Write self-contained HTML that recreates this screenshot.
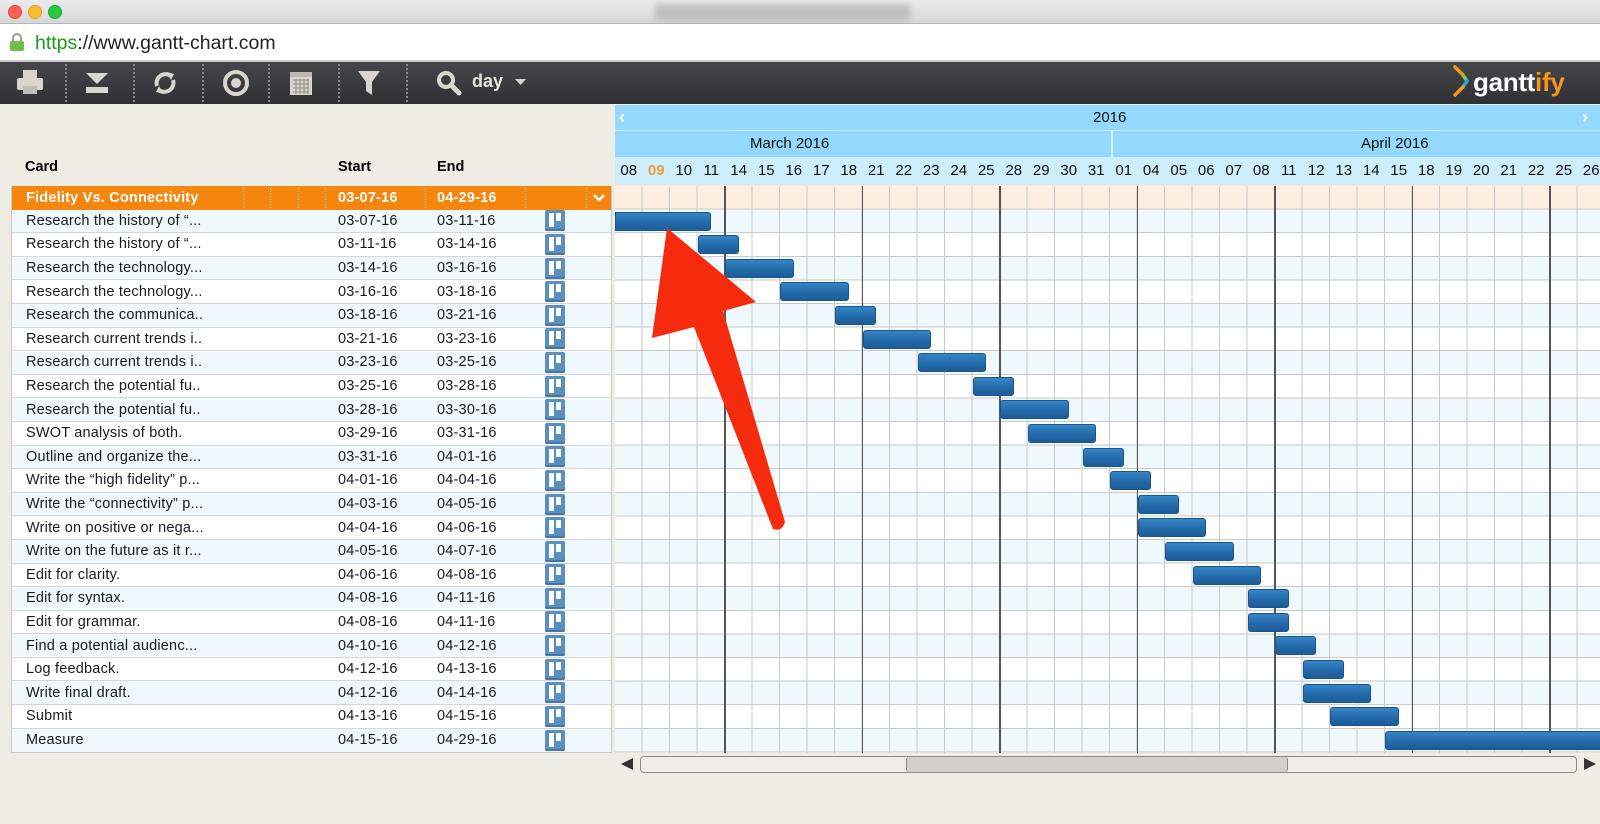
<!DOCTYPE html>
<html><head><meta charset="utf-8"><style>
*{margin:0;padding:0;box-sizing:border-box}
body{width:1600px;height:824px;overflow:hidden;background:#eeede4;font-family:"Liberation Sans",sans-serif;position:relative}
.abs{position:absolute}
#title{left:0;top:0;width:1600px;height:24px;background:linear-gradient(#ebebeb,#d6d6d6);border-bottom:1px solid #b5b5b5}
.dot{position:absolute;top:5px;width:14px;height:14px;border-radius:50%}
#addr{left:0;top:24px;width:1600px;height:38px;background:#fff;border-bottom:2px solid #c9c9c9}
#tb{left:0;top:62px;width:1600px;height:42px;background:linear-gradient(#45474b,#2f3034);}
.sep{position:absolute;top:2px;height:38px;border-left:2px dotted #8a8a8a}
#lt{left:11px;top:186px;width:601px}
.row{display:flex;height:23.6px;align-items:center;font-size:14.5px;color:#1a1a1a;border-bottom:1px solid #d6d6d6;letter-spacing:.2px}
.row .c{width:326px;padding-left:14px;white-space:nowrap;overflow:hidden}
.row .s{width:99px}
.row .e{width:108px}
.ic{width:20px;height:21px;background:#5a8fc0;border-radius:2px;position:relative;box-shadow:inset 0 -2px 0 #4776a3}
.ic:before{content:"";position:absolute;left:4px;top:3px;width:5px;height:14px;background:#fff}
.ic:after{content:"";position:absolute;left:11px;top:3px;width:5px;height:8px;background:#fff}
.rb{background:#eef8fd}.rw{background:#fff}
.or{background:#f7860f;color:#fff;font-weight:bold;border-bottom:none}
#days{left:615px;top:157px;height:28px;display:flex;background:#cdeefd;width:985px;overflow:hidden}
#days span{flex:0 0 27.5px;text-align:center;font-size:15px;line-height:28px;color:#111}
#grid{left:615px;top:186px;width:985px;height:567px;
background:
repeating-linear-gradient(to right,transparent 0 26.5px,#c9c9c9 26.5px 27.5px),
repeating-linear-gradient(to bottom,transparent 0 22.6px,#c9c9c9 22.6px 23.6px),
linear-gradient(#fdeee0 0 23.6px,transparent 23.6px),
repeating-linear-gradient(to bottom,#fff 0 23.6px,#eef8fd 23.6px 47.2px);}
.wk{position:absolute;top:186px;height:567px;width:1.5px;background:#555}
.bar{position:absolute;height:19px;border-radius:3px;background:linear-gradient(#3585c6,#2268a8 60%,#1d5c98);border:1px solid #1b558d}
</style></head><body>
<div id="title" class="abs">
<div class="dot" style="left:8px;background:#fc5f57;border:1px solid #df4744"></div>
<div class="dot" style="left:28px;background:#fdbc2e;border:1px solid #dea033"></div>
<div class="dot" style="left:48px;background:#28c840;border:1px solid #1ea934"></div>
<div class="abs" style="left:655px;top:4px;width:255px;height:17px;background:#bfbfbf;filter:blur(3px);border-radius:3px"></div>
</div>
<div id="addr" class="abs">
<svg class="abs" style="left:9px;top:8px" width="16" height="20" viewBox="0 0 16 20"><path d="M4 9V6a4 4 0 0 1 8 0v3" fill="none" stroke="#9a9a9a" stroke-width="2"/><rect x="1" y="9" width="14" height="10" rx="2" fill="#6cc04a"/></svg>
<div class="abs" style="left:35px;top:8px;font-size:19.5px;color:#222"><span style="color:#1a9a1a">https</span>://www.gantt-chart.com</div>
</div>
<div id="tb" class="abs">
<svg class="abs" style="left:16px;top:7px" width="28" height="26" viewBox="0 0 28 26"><rect x="7" y="1" width="14" height="8" fill="#d8d6cc"/><rect x="1" y="9" width="26" height="12" rx="2" fill="#d8d6cc"/><rect x="7" y="17" width="14" height="8" fill="#c2c0b6"/></svg>
<div class="sep" style="left:65px"></div>
<svg class="abs" style="left:85px;top:9px" width="24" height="24" viewBox="0 0 24 24"><path d="M1 2h22l-11 11z" fill="#d8d6cc"/><rect x="1" y="16" width="22" height="6" fill="#d8d6cc"/></svg>
<div class="sep" style="left:133px"></div>
<svg class="abs" style="left:152px;top:8px" width="26" height="26" viewBox="0 0 26 26"><path d="M5 16A9 9 0 0 1 19 6" fill="none" stroke="#d8d6cc" stroke-width="4"/><path d="M21 10A9 9 0 0 1 7 20" fill="none" stroke="#d8d6cc" stroke-width="4"/><path d="M15 2l7 2-3 6z" fill="#d8d6cc"/><path d="M11 24l-7-2 3-6z" fill="#d8d6cc"/></svg>
<div class="sep" style="left:202px"></div>
<svg class="abs" style="left:222px;top:7px" width="28" height="28"><circle cx="14" cy="14" r="11" fill="none" stroke="#d8d6cc" stroke-width="4"/><circle cx="14" cy="14" r="5" fill="#d8d6cc"/></svg>
<div class="sep" style="left:268px"></div>
<svg class="abs" style="left:289px;top:7px" width="24" height="27" viewBox="0 0 24 27"><rect x="1" y="3" width="22" height="23" fill="#d8d6cc"/><rect x="1" y="3" width="22" height="5" fill="#bcbab0"/><path d="M4 11h16M4 15h16M4 19h16M4 23h16M7 10v15M11 10v15M15 10v15M19 10v15" stroke="#8d8b83" stroke-width="1"/></svg>
<div class="sep" style="left:338px"></div>
<svg class="abs" style="left:357px;top:8px" width="24" height="26" viewBox="0 0 24 26"><path d="M1 1h22l-8 11v13l-6-4v-9z" fill="#d8d6cc"/></svg>
<div class="sep" style="left:406px"></div>
<svg class="abs" style="left:436px;top:8px" width="26" height="26" viewBox="0 0 26 26"><circle cx="10" cy="10" r="7" fill="none" stroke="#d8d6cc" stroke-width="4"/><path d="M15 15l8 8" stroke="#d8d6cc" stroke-width="5" stroke-linecap="round"/></svg>
<div class="abs" style="left:472px;top:9px;font-size:18px;font-weight:bold;color:#e6e4da">day</div>
<svg class="abs" style="left:515px;top:17px" width="11" height="7"><path d="M0 0h11L5.5 6z" fill="#d8d6cc"/></svg>
<svg class="abs" style="left:1453px;top:2px" width="18" height="34" viewBox="0 0 18 34"><path d="M2 3l8 8" stroke="#f7941d" stroke-width="3.5" stroke-linecap="round"/><path d="M10 11l4 6" stroke="#8bc34a" stroke-width="3.5" stroke-linecap="round"/><path d="M14 17l-4 6" stroke="#2aa5dc" stroke-width="3.5" stroke-linecap="round"/><path d="M10 23l-8 8" stroke="#f7941d" stroke-width="3.5" stroke-linecap="round"/></svg>
<div class="abs" style="left:1473px;top:5px;font-size:26px;font-weight:bold;color:#fff;letter-spacing:-.3px">gantt<span style="color:#f7941d">ify</span></div>
</div>

<div class="abs" style="left:615px;top:105px;width:985px;height:26px;background:#94d8fd;border-bottom:1px solid #cdeefd">
<div class="abs" style="left:4px;top:2px;color:#fff;font-weight:bold;font-size:18px">&#8249;</div>
<div class="abs" style="left:478px;top:4px;font-size:15px;color:#111">2016</div>
<div class="abs" style="left:967px;top:2px;color:#fff;font-weight:bold;font-size:18px">&#8250;</div>
</div>
<div class="abs" style="left:615px;top:131px;width:985px;height:26px;background:#94d8fd">
<div class="abs" style="left:496px;top:0;width:1.5px;height:26px;background:#d9f2fe"></div>
<div class="abs" style="left:135px;top:4px;font-size:15px;color:#111">March 2016</div>
<div class="abs" style="left:746px;top:4px;font-size:15px;color:#111">April 2016</div>
</div>
<div id="days" class="abs"><span>08</span><span style="color:#f39b2d;font-weight:bold">09</span><span>10</span><span>11</span><span>14</span><span>15</span><span>16</span><span>17</span><span>18</span><span>21</span><span>22</span><span>23</span><span>24</span><span>25</span><span>28</span><span>29</span><span>30</span><span>31</span><span>01</span><span>04</span><span>05</span><span>06</span><span>07</span><span>08</span><span>11</span><span>12</span><span>13</span><span>14</span><span>15</span><span>18</span><span>19</span><span>20</span><span>21</span><span>22</span><span>25</span><span>26</span></div>

<div class="abs" style="left:25px;top:159px;font-size:14.5px;font-weight:bold">Card</div>
<div class="abs" style="left:338px;top:159px;font-size:14.5px;font-weight:bold">Start</div>
<div class="abs" style="left:437px;top:159px;font-size:14.5px;font-weight:bold">End</div>

<div id="lt" class="abs" style="border-left:1px solid #c8c8c8;border-right:1px solid #c8c8c8;border-bottom:1px solid #c8c8c8">
<div class="row or" style="position:relative"><div class="c">Fidelity Vs. Connectivity</div><div class="s">03-07-16</div><div class="e">04-29-16</div>
<div class="sep" style="top:2px;height:20px;left:231px;border-left:1.5px dotted #ffd9a8"></div><div class="sep" style="top:2px;height:20px;left:258px;border-left:1.5px dotted #ffd9a8"></div><div class="sep" style="top:2px;height:20px;left:286px;border-left:1.5px dotted #ffd9a8"></div><div class="sep" style="top:2px;height:20px;left:313px;border-left:1.5px dotted #ffd9a8"></div><div class="sep" style="top:2px;height:20px;left:413px;border-left:1.5px dotted #ffd9a8"></div><div class="sep" style="top:2px;height:20px;left:513px;border-left:1.5px dotted #ffd9a8"></div><div class="sep" style="top:2px;height:20px;left:574px;border-left:1.5px dotted #ffd9a8"></div>
<svg class="abs" style="left:581px;top:8px" width="12" height="8"><path d="M1 1l5 5 5-5" fill="none" stroke="#fff" stroke-width="2.5"/></svg></div>
<div class="row rb"><div class="c">Research the history of “...</div><div class="s">03-07-16</div><div class="e">03-11-16</div><div class="ic"></div></div>
<div class="row rw"><div class="c">Research the history of “...</div><div class="s">03-11-16</div><div class="e">03-14-16</div><div class="ic"></div></div>
<div class="row rb"><div class="c">Research the technology...</div><div class="s">03-14-16</div><div class="e">03-16-16</div><div class="ic"></div></div>
<div class="row rw"><div class="c">Research the technology...</div><div class="s">03-16-16</div><div class="e">03-18-16</div><div class="ic"></div></div>
<div class="row rb"><div class="c">Research the communica..</div><div class="s">03-18-16</div><div class="e">03-21-16</div><div class="ic"></div></div>
<div class="row rw"><div class="c">Research current trends i..</div><div class="s">03-21-16</div><div class="e">03-23-16</div><div class="ic"></div></div>
<div class="row rb"><div class="c">Research current trends i..</div><div class="s">03-23-16</div><div class="e">03-25-16</div><div class="ic"></div></div>
<div class="row rw"><div class="c">Research the potential fu..</div><div class="s">03-25-16</div><div class="e">03-28-16</div><div class="ic"></div></div>
<div class="row rb"><div class="c">Research the potential fu..</div><div class="s">03-28-16</div><div class="e">03-30-16</div><div class="ic"></div></div>
<div class="row rw"><div class="c">SWOT analysis of both.</div><div class="s">03-29-16</div><div class="e">03-31-16</div><div class="ic"></div></div>
<div class="row rb"><div class="c">Outline and organize the...</div><div class="s">03-31-16</div><div class="e">04-01-16</div><div class="ic"></div></div>
<div class="row rw"><div class="c">Write the “high fidelity” p...</div><div class="s">04-01-16</div><div class="e">04-04-16</div><div class="ic"></div></div>
<div class="row rb"><div class="c">Write the “connectivity” p...</div><div class="s">04-03-16</div><div class="e">04-05-16</div><div class="ic"></div></div>
<div class="row rw"><div class="c">Write on positive or nega...</div><div class="s">04-04-16</div><div class="e">04-06-16</div><div class="ic"></div></div>
<div class="row rb"><div class="c">Write on the future as it r...</div><div class="s">04-05-16</div><div class="e">04-07-16</div><div class="ic"></div></div>
<div class="row rw"><div class="c">Edit for clarity.</div><div class="s">04-06-16</div><div class="e">04-08-16</div><div class="ic"></div></div>
<div class="row rb"><div class="c">Edit for syntax.</div><div class="s">04-08-16</div><div class="e">04-11-16</div><div class="ic"></div></div>
<div class="row rw"><div class="c">Edit for grammar.</div><div class="s">04-08-16</div><div class="e">04-11-16</div><div class="ic"></div></div>
<div class="row rb"><div class="c">Find a potential audienc...</div><div class="s">04-10-16</div><div class="e">04-12-16</div><div class="ic"></div></div>
<div class="row rw"><div class="c">Log feedback.</div><div class="s">04-12-16</div><div class="e">04-13-16</div><div class="ic"></div></div>
<div class="row rb"><div class="c">Write final draft.</div><div class="s">04-12-16</div><div class="e">04-14-16</div><div class="ic"></div></div>
<div class="row rw"><div class="c">Submit</div><div class="s">04-13-16</div><div class="e">04-15-16</div><div class="ic"></div></div>
<div class="row rb" style="border-bottom:none"><div class="c">Measure</div><div class="s">04-15-16</div><div class="e">04-29-16</div><div class="ic"></div></div>
</div>

<div id="grid" class="abs"></div>
<div class="wk" style="left:724px"></div><div class="wk" style="left:861.5px"></div><div class="wk" style="left:999px"></div><div class="wk" style="left:1136.5px"></div><div class="wk" style="left:1274px"></div><div class="wk" style="left:1411.5px"></div><div class="wk" style="left:1549px"></div>

<div class="bar" style="left:615px;width:96px;top:211.5px;border-radius:0 3px 3px 0"></div>
<div class="bar" style="left:697.5px;width:41.25px;top:235.1px"></div>
<div class="bar" style="left:725px;width:68.75px;top:258.7px"></div>
<div class="bar" style="left:780px;width:68.75px;top:282.3px"></div>
<div class="bar" style="left:835px;width:41.25px;top:305.9px"></div>
<div class="bar" style="left:862.5px;width:68.75px;top:329.5px"></div>
<div class="bar" style="left:917.5px;width:68.75px;top:353.1px"></div>
<div class="bar" style="left:972.5px;width:41.25px;top:376.7px"></div>
<div class="bar" style="left:1000px;width:68.75px;top:400.3px"></div>
<div class="bar" style="left:1027.5px;width:68.75px;top:423.9px"></div>
<div class="bar" style="left:1082.5px;width:41.25px;top:447.5px"></div>
<div class="bar" style="left:1110px;width:41.25px;top:471.1px"></div>
<div class="bar" style="left:1137.5px;width:41.25px;top:494.7px"></div>
<div class="bar" style="left:1137.5px;width:68.75px;top:518.3px"></div>
<div class="bar" style="left:1165px;width:68.75px;top:541.9px"></div>
<div class="bar" style="left:1192.5px;width:68.75px;top:565.5px"></div>
<div class="bar" style="left:1247.5px;width:41.25px;top:589.1px"></div>
<div class="bar" style="left:1247.5px;width:41.25px;top:612.7px"></div>
<div class="bar" style="left:1275px;width:41.25px;top:636.3px"></div>
<div class="bar" style="left:1302.5px;width:41.25px;top:659.9px"></div>
<div class="bar" style="left:1302.5px;width:68.75px;top:683.5px"></div>
<div class="bar" style="left:1330px;width:68.75px;top:707.1px"></div>
<div class="bar" style="left:1385px;width:240px;top:730.7px"></div>

<svg class="abs" style="left:620px;top:757px" width="14" height="14"><path d="M1 7l12-6v12z" fill="#333"/></svg>
<div class="abs" style="left:640px;top:756px;width:937px;height:17px;border:1px solid #8a8a8a;border-radius:4px;background:#efeee6"></div>
<div class="abs" style="left:906px;top:757px;width:382px;height:15px;border-left:1px solid #8a8a8a;border-right:1px solid #8a8a8a;background:#d2d1c9;border-radius:3px"></div>
<svg class="abs" style="left:1583px;top:757px" width="14" height="14"><path d="M13 7L1 1v12z" fill="#333"/></svg>

<svg class="abs" style="left:0;top:0" width="1600" height="824"><path d="M667 228L756 302L723 311L785 522Q782 532 773 529L694 327L652 338Z" fill="#f62a0c"/></svg>
</body></html>
